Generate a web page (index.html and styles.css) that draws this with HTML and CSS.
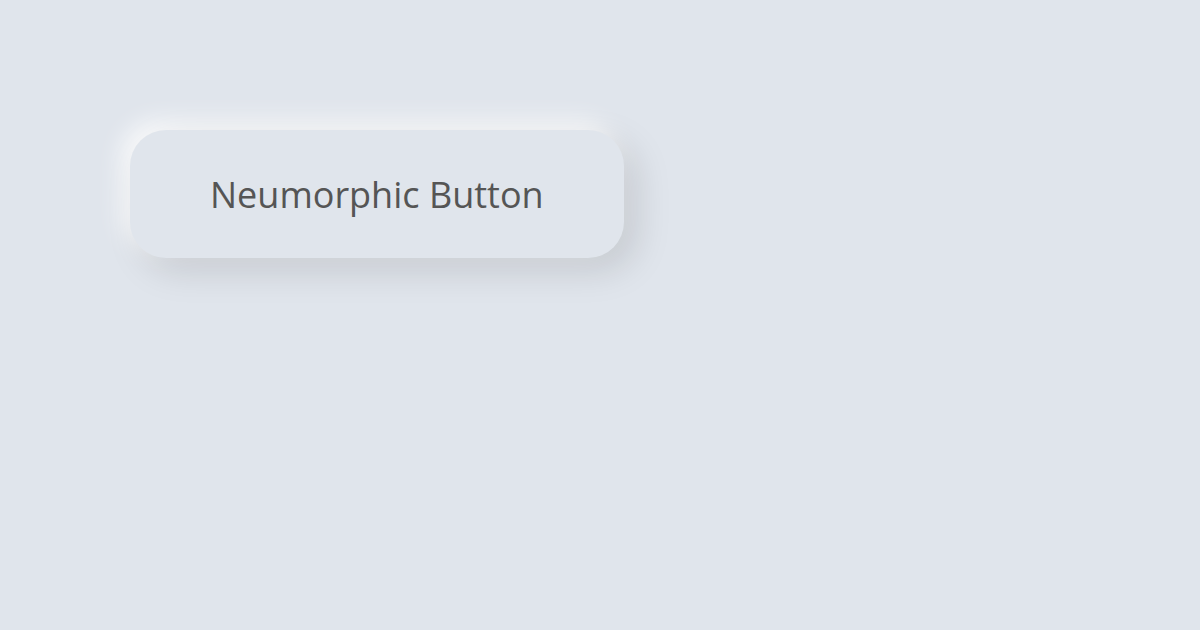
FILE: index.html
```html
<!DOCTYPE html>
<html lang="en">
<head>
  <meta charset="UTF-8" />
  <meta name="viewport" content="width=device-width, initial-scale=1.0"/>
  <title>Neumorphic Button</title>
  <link rel="stylesheet" href="styles.css">
</head>
<body>
  <div class="stage">
    <button class="neu-btn">Neumorphic Button</button>
  </div>
</body>
</html>
```

FILE: styles.css
```css
body {
  margin: 0;
  background-color: #e0e5ec;
  font-family: "Open Sans", sans-serif;
  min-height: 100vh;
}

.stage {
  padding: 130px;
}

.neu-btn {
  background-color: #e0e5ec;
  color: #555;
  font-family: "Open Sans", sans-serif;
  font-size: 36px;
  line-height: 48px;
  padding: 41px 80px 39px;
  border: none;
  border-radius: 36px;
  cursor: pointer;
  box-shadow: 12px 12px 36px rgba(0, 0, 0, 0.13),
              -8px -8px 24px rgba(255, 255, 255, 0.9);
}
```
